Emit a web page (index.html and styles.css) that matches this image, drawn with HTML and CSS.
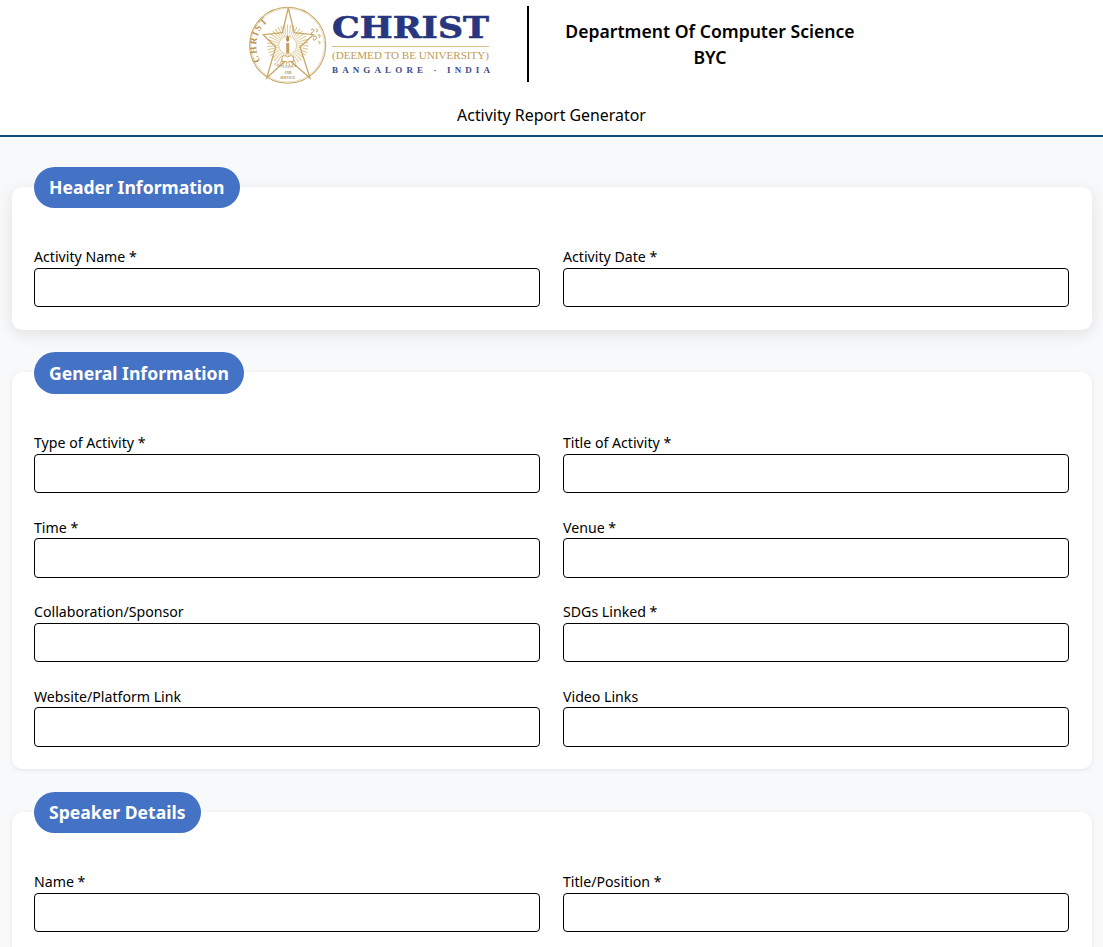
FILE: index.html
```html
<!DOCTYPE html>
<html lang="en">
<head>
<meta charset="utf-8">
<title>Activity Report Generator</title>
<link rel="stylesheet" href="styles.css">
</head>
<body>
<header class="top">
  <div class="brand">
    <svg class="logo" width="244" height="80" viewBox="0 0 244 80" aria-label="Christ University logo">
      <defs>
        <path id="arcL" d="M11.500 55 A30.500 30.500 0 0 1 33 9.300"/>
        <path id="arcB" d="M25 59 Q38.700 64.500 52.500 59"/>
      </defs>
      <circle class="ring" cx="38.700" cy="39.300" r="38"/>
      <circle class="ring-thin" cx="38.700" cy="39.300" r="36.800"/>
      <circle class="rays" cx="38.700" cy="39.300" r="15"/>
      <path class="star" d="M39.300 2 L45.300 26.700 L64.300 28.700 L51 41 L61 72 L38.700 52.700 L17.700 72 L26.700 41 L14.300 28.700 L33.300 26.700 Z"/>
      <circle class="halo" cx="38.700" cy="39.300" r="9"/>
      <path class="candle" d="M37.200 37h3v10.500h-3z"/>
      <path class="flame" d="M38.700 29c2.200 3 2.200 5.500 0 7c-2.200-1.500-2.200-4 0-7z"/>
      <path class="book" d="M33 50.500c2-1 4-1 5.700.5c1.700-1.500 3.700-1.500 5.700-.5v5.500c-2-1-4-1-5.700.5c-1.700-1.500-3.700-1.500-5.700-.5z"/>
      <path class="script" d="M62 24c2-2 4 0 2 2s-3 0-1 2M67 23c2 0 2 3 0 3M64 31c3-2 5 0 3 2s-4 1-2-1M69 29c2-1 3 1 1 3M69 36c2-1 3 1 1 2"/>
      <text class="seal-text"><textPath href="#arcL">CHRIST</textPath></text>
      <text class="seal-small"><textPath href="#arcB">EXCELLENCE</textPath></text>
      <text class="seal-small" x="38.700" y="67.500" text-anchor="middle">AND</text>
      <text class="seal-small" x="38.700" y="72.500" text-anchor="middle">SERVICE</text>
      <text class="word" x="83" y="32" textLength="157" lengthAdjust="spacingAndGlyphs">CHRIST</text>
      <path class="rule" d="M83 40.500H240"/>
      <text class="deemed" x="83" y="53" textLength="157" lengthAdjust="spacingAndGlyphs">(DEEMED TO BE UNIVERSITY)</text>
      <text class="place" x="83" y="67" textLength="158">BANGALORE · INDIA</text>
    </svg>
    <div class="divider"></div>
    <div class="dept">
      <div>Department Of Computer Science</div>
      <div>BYC</div>
    </div>
  </div>
  <div class="subtitle">Activity Report Generator</div>
</header>
<main class="page">
  <section class="card card-raised">
    <h2 class="pill">Header Information</h2>
    <div class="fields">
      <div class="field"><label class="label">Activity Name *</label><input class="input"></div>
      <div class="field"><label class="label">Activity Date *</label><input class="input"></div>
    </div>
  </section>
  <section class="card">
    <h2 class="pill">General Information</h2>
    <div class="fields">
      <div class="field"><label class="label">Type of Activity *</label><input class="input"></div>
      <div class="field"><label class="label">Title of Activity *</label><input class="input"></div>
      <div class="field"><label class="label">Time *</label><input class="input"></div>
      <div class="field"><label class="label">Venue *</label><input class="input"></div>
      <div class="field"><label class="label">Collaboration/Sponsor</label><input class="input"></div>
      <div class="field"><label class="label">SDGs Linked *</label><input class="input"></div>
      <div class="field"><label class="label">Website/Platform Link</label><input class="input"></div>
      <div class="field"><label class="label">Video Links</label><input class="input"></div>
    </div>
  </section>
  <section class="card">
    <h2 class="pill">Speaker Details</h2>
    <div class="fields">
      <div class="field"><label class="label">Name *</label><input class="input"></div>
      <div class="field"><label class="label">Title/Position *</label><input class="input"></div>
    </div>
  </section>
</main>
</body>
</html>
```
FILE: styles.css
```css
* { box-sizing: border-box; }
html, body { margin: 0; height: 100%; overflow: hidden; }
body { background: #f8f9fb; color: #000; font-family: "Noto Sans", "Open Sans", sans-serif; }

.top { background: #fff; height: 137px; border-bottom: 2px solid #0f4c75; display: flex; flex-direction: column; align-items: center; }
.brand { display: flex; align-items: flex-start; width: 100%; height: 95px; padding: 6px 0 0 249px; }
.logo { display: block; flex: none; }
.ring, .ring-thin, .star { fill: none; stroke: #c9a767; }
.ring { stroke-width: 1.100px; }
.ring-thin { stroke-width: .4px; }
.star { stroke-width: 1.300px; }
.rays { fill: none; stroke: #dfc690; stroke-width: 11px; stroke-dasharray: .9 1.500; }
.halo { fill: #fff; stroke: #c9a767; stroke-width: .6px; }
.candle { fill: #c49f5c; }
.flame { fill: #b98f45; }
.book { fill: #fff; stroke: #b98f45; stroke-width: .8px; }
.script { fill: none; stroke: #b98f45; stroke-width: .9px; }
.seal-text { font: 700 9.500px "Liberation Serif", serif; fill: #b8934f; letter-spacing: 1.400px; }
.seal-small { font: 700 3.400px "Liberation Serif", serif; fill: #a98a50; }
.word { font: 700 30px "DejaVu Serif", serif; fill: #27367f; stroke: #27367f; stroke-width: .6px; }
.rule { stroke: #d9bf87; stroke-width: 1px; fill: none; }
.deemed { font: 400 10.500px "Liberation Serif", serif; fill: #c09a57; }
.place { font: 700 9px "Liberation Serif", serif; fill: #3c4a8c; }
.divider { width: 2px; height: 76px; background: #000; margin-left: 34px; flex: none; }
.dept { width: 362px; flex: none; text-align: center; font-size: 17.600px; font-weight: 600; line-height: 26px; padding-top: 12px; }
.subtitle { font-size: 15.900px; line-height: 24px; margin-top: 8px; }

.page { padding: 49.600px 11px 0 12px; display: flex; flex-direction: column; gap: 42.500px; }
.card { background: #fff; border-radius: 10px; padding: 59.300px 23px 22.500px 22px; position: relative; box-shadow: 0 1px 4px rgba(0, 0, 0, .09); }
.card-raised { box-shadow: 0 4px 16px rgba(0, 0, 0, .1); }
.pill { position: absolute; left: 22px; top: -20px; margin: 0; height: 41.400px; padding: 0 15px 1px; display: flex; align-items: center; border-radius: 21px; background: #4472c4; color: #fff; font: 700 17.600px "Noto Sans", sans-serif; }
.fields { display: grid; grid-template-columns: 1fr 1fr; column-gap: 23px; row-gap: 23px; }
.field { display: flex; flex-direction: column; min-width: 0; }
.label { font-size: 14.150px; line-height: 22px; margin: .5px 0 -.5px; }
.input { height: 39.500px; width: 100%; border: 1.500px solid #000; border-radius: 4px; background: #fff; }
```
